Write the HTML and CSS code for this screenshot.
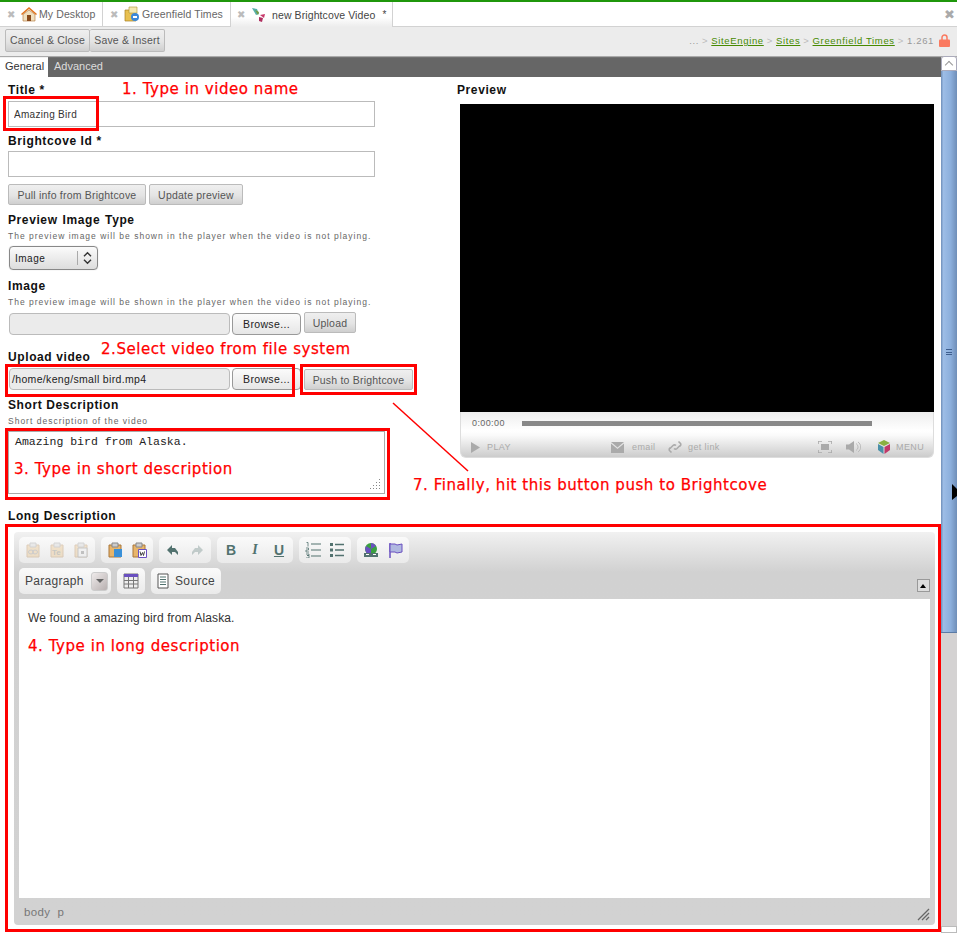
FILE: index.html
```html
<!DOCTYPE html>
<html lang="en">
<head>
    <meta charset="UTF-8">
    <title>new Brightcove Video</title>
    <link rel="stylesheet" href="styles.css">
</head>
<body>
    <svg class="defs" width="0" height="0">
        <symbol id="clip" viewBox="0 0 16 16">
            <path d="M2 3h12v12H2z" fill="#e8b56a" stroke="#a9773a"/>
            <path d="M5 1h6v4H5z" fill="#ccc" stroke="#888"/>
        </symbol>
    </svg>

    <div class="page">
        <header class="tabbar">
            <div class="tab tab-first">
                <span class="tab-x">&#10006;</span>
                <svg class="tab-icon" viewBox="0 0 16 16"><path d="M0 8 8 1l8 7-1 1-7-6-7 6z" fill="#e2731c"/><path d="M2 8.500 8 4l6 4.500V15H2z" fill="#f0e0c0" stroke="#b07030" stroke-width=".6"/><path d="M6 9h4v6H6z" fill="#8a4a1a"/></svg>
                <span class="tab-label">My Desktop</span>
            </div>
            <div class="tab tab-second">
                <span class="tab-x">&#10006;</span>
                <svg class="tab-icon" viewBox="0 0 16 16"><path d="M1 4h9l2 2v9H1z" fill="#e8c050" stroke="#a88020" stroke-width=".7"/><path d="M5 1h8v6H5z" fill="#f4e8b0" stroke="#b09030" stroke-width=".6"/><circle cx="11" cy="11" r="4" fill="#3a88d8"/><path d="M9 10h4v2H9z" fill="#fff"/></svg>
                <span class="tab-label">Greenfield Times</span>
            </div>
            <div class="tab tab-active">
                <span class="tab-x">&#10006;</span>
                <svg class="tab-icon" viewBox="0 0 16 16"><path d="M1 1l5 1 2 5-3 1z" fill="#58b0a8"/><path d="M4 3l4 2-1 3z" fill="#7a9a40"/><path d="M9 8l5-1-1 4z" fill="#c8386a"/><path d="M8 10l4 1-1 4-3-1z" fill="#b03060"/></svg>
                <span class="tab-label">new Brightcove Video</span>
                <span class="tab-star">*</span>
            </div>
            <span class="tabbar-x">&#10006;</span>
        </header>

        <div class="toolbar">
            <div class="btn-group">
                <button class="btn btn-cancel">Cancel &amp; Close</button>
                <button class="btn btn-save">Save &amp; Insert</button>
            </div>
            <div class="crumbs">
                <span>...</span><i>&gt;</i><a href="#">SiteEngine</a><i>&gt;</i><a href="#">Sites</a><i>&gt;</i><a href="#">Greenfield Times</a><i>&gt;</i><span>1.261</span>
                <svg class="lock" viewBox="0 0 11 13"><path d="M3 6V3.500a2.500 2.500 0 0 1 5 0V6" fill="none" stroke="#fa7a60" stroke-width="1.500"/><rect y="5.500" width="11" height="7.500" rx="1" fill="#fa7a60"/></svg>
            </div>
        </div>

        <div class="workspace">
            <main class="content">
                <nav class="subtabs">
                    <span class="subtab subtab-on">General</span>
                    <span class="subtab">Advanced</span>
                </nav>

                <div class="columns">
                    <form class="form">
                        <label class="lbl lbl-title">Title *</label>
                        <input class="text-input input-title" type="text" value="Amazing Bird">
                        <label class="lbl lbl-id">Brightcove Id *</label>
                        <input class="text-input input-id" type="text">
                        <div class="row row-pull">
                            <span class="btn btn-pull">Pull info from Brightcove</span>
                            <span class="btn btn-update">Update preview</span>
                        </div>
                        <label class="lbl lbl-type">Preview Image Type</label>
                        <p class="hint">The preview image will be shown in the player when the video is not playing.</p>
                        <div class="select">
                            <span>Image</span>
                            <svg class="select-arrows" viewBox="0 0 8 12"><path d="M1 4.500 4 1.500l3 3M1 7.500l3 3 3-3" fill="none" stroke="#333" stroke-width="1.200"/></svg>
                        </div>
                        <label class="lbl lbl-image">Image</label>
                        <p class="hint">The preview image will be shown in the player when the video is not playing.</p>
                        <div class="row row-file">
                            <div class="file-path"></div>
                            <span class="browse">Browse...</span>
                            <span class="btn btn-upload">Upload</span>
                        </div>
                        <label class="lbl lbl-upload">Upload video</label>
                        <div class="row row-file-2">
                            <div class="file-path">/home/keng/small bird.mp4</div>
                            <span class="browse">Browse...</span>
                            <span class="btn btn-push">Push to Brightcove</span>
                        </div>
                        <label class="lbl lbl-short">Short Description</label>
                        <p class="hint">Short description of the video</p>
                        <div class="textarea">
                            Amazing bird from Alaska.
                            <svg class="grip" viewBox="0 0 11 11"><path d="M9.500 1v1M9.500 4v1M6.500 4v1M9.500 7v1M6.500 7v1M3.500 7v1M9.500 10v1M6.500 10v1M3.500 10v1M.5 10v1" stroke="#888"/></svg>
                        </div>
                    </form>

                    <section class="preview">
                        <h3 class="lbl preview-title">Preview</h3>
                        <div class="player">
                            <div class="screen"></div>
                            <div class="controls">
                                <div class="seek">
                                    <span class="time">0:00:00</span>
                                    <span class="seek-bar"></span>
                                </div>
                                <div class="actions">
                                    <svg class="act-play" viewBox="0 0 9 11"><path d="M0 0l9 5.500L0 11z" fill="#aaa"/></svg>
                                    <span class="act-text act-play-text">PLAY</span>
                                    <svg class="act-mail" viewBox="0 0 13 11"><path d="M0 0h13L6.500 5.500z" fill="#aaa"/><path d="M0 1.500 6.500 7 13 1.500V11H0z" fill="#aaa"/></svg>
                                    <span class="act-text act-email">email</span>
                                    <svg class="act-link" viewBox="0 0 14 14"><path d="M2 8.500 5 5.500a2.200 2.200 0 0 1 3 0M12 5.500 9 8.500a2.200 2.200 0 0 1-3 0M3.500 12.500 1.500 10.500a2 2 0 0 1 0-2l1-1M10.500 1.500l2 2a2 2 0 0 1 0 2l-1 1" fill="none" stroke="#aaa" stroke-width="1.600"/></svg>
                                    <span class="act-text act-getlink">get link</span>
                                    <svg class="act-full" viewBox="0 0 14 12"><path d="M0 3V0h4M10 0h4v3M14 9v3h-4M4 12H0V9" fill="none" stroke="#aaa" stroke-width="1.600"/><rect x="3" y="3" width="8" height="6" fill="#aaa"/></svg>
                                    <svg class="act-vol" viewBox="0 0 15 12"><path d="M0 3.500h3L8 0v12L3 8.500H0z" fill="#aaa"/><path d="M10 2.500a4 4 0 0 1 0 7M12 1a6 6 0 0 1 0 10" fill="none" stroke="#bbb"/></svg>
                                    <svg class="act-cube" viewBox="0 0 14 14"><path d="M7 0l6 3-6 3-6-3z" fill="#8ab040"/><path d="M1 4l5.500 3v7L1 10z" fill="#4a90a8"/><path d="M7.500 7 13 4v6l-5.500 4z" fill="#c03868"/></svg>
                                    <span class="act-text act-menu">MENU</span>
                                </div>
                            </div>
                        </div>
                    </section>
                </div>

                <label class="lbl lbl-long">Long Description</label>
                <section class="editor">
                    <div class="ed-row">
                        <div class="ed-group">
                            <svg class="ed-ico ed-faded" viewBox="0 0 16 16"><use href="#clip"/><ellipse cx="6" cy="10" rx="2.500" ry="2" fill="none" stroke="#777"/><ellipse cx="10" cy="10" rx="2.500" ry="2" fill="none" stroke="#777"/></svg>
                            <svg class="ed-ico ed-faded" viewBox="0 0 16 16"><use href="#clip"/><text class="ed-te" x="3" y="13">Te</text></svg>
                            <svg class="ed-ico ed-faded" viewBox="0 0 16 16"><use href="#clip"/><path d="M5 6h9v9H5z" fill="#eee" stroke="#666"/><path d="M8 9h3v3H8z" fill="#555"/></svg>
                        </div>
                        <div class="ed-group">
                            <svg class="ed-ico" viewBox="0 0 16 16"><use href="#clip"/><path d="M7 7h8v8H7z" fill="#3a90d8"/></svg>
                            <svg class="ed-ico" viewBox="0 0 16 16"><use href="#clip"/><path d="M7.500 7.500h8v8h-8z" fill="#fff" stroke="#6a50c0"/><path d="M9 9.500l1 4 1.500-3 1 3 1-4" fill="none" stroke="#444"/></svg>
                        </div>
                        <div class="ed-group">
                            <svg class="ed-ico" viewBox="0 0 16 16"><path d="M7 3 2 8l5 5v-3h3l3 3V10L10 6H7z" fill="#52726f"/></svg>
                            <svg class="ed-ico ed-redo" viewBox="0 0 16 16"><path d="M9 3l5 5-5 5v-3H6l-3 3V10l3-4h3z" fill="#52726f"/></svg>
                        </div>
                        <div class="ed-group">
                            <span class="ed-txt ed-b">B</span>
                            <span class="ed-txt ed-i">I</span>
                            <span class="ed-txt ed-u">U</span>
                        </div>
                        <div class="ed-group">
                            <svg class="ed-ico" viewBox="0 0 16 16"><path d="M6 2h10M6 8h10M6 14h10" stroke="#52726f" stroke-width="1.200"/><path d="M1.500.5h1.500v4M1 6h2.500v2H1v2h3M1 12h3v1.500H2 4V16H1" fill="none" stroke="#52726f" stroke-width=".8"/></svg>
                            <svg class="ed-ico" viewBox="0 0 16 16"><path d="M1 1h3v3H1zM1 6.500h3v3H1zM1 12h3v3H1z" fill="#52726f"/><path d="M6 2.500h9M6 8h9M6 13.500h9" stroke="#52726f" stroke-width="1.400"/></svg>
                        </div>
                        <div class="ed-group">
                            <svg class="ed-ico" viewBox="0 0 16 16"><circle cx="8" cy="7" r="6" fill="#3aa040"/><path d="M8 1a6 6 0 0 1 5 3L8 7zM3 4l5 3v6a6 6 0 0 1-5-9z" fill="#6a50c0"/><path d="M1 11h14v4H1z" fill="#52726f"/><path d="M3 12.500h3M10 12.500h3" stroke="#fff"/></svg>
                            <svg class="ed-ico" viewBox="0 0 16 16"><path d="M3 1v15" stroke="#6a50c0" stroke-width="1.500"/><path d="M3 2h5l2 1 5-1v8l-5 1-2-1H3z" fill="#b0b8e0" stroke="#6a50c0"/></svg>
                        </div>
                    </div>
                    <div class="ed-row ed-row-2">
                        <div class="ed-group ed-format">
                            <span class="ed-format-text">Paragraph</span>
                            <span class="ed-drop"></span>
                        </div>
                        <div class="ed-group ed-single">
                            <svg class="ed-ico" viewBox="0 0 16 16"><path d="M1 1h14v14H1z" fill="#eee" stroke="#777"/><path d="M1 1h14v3H1z" fill="#6a50c0"/><path d="M1 7.500h14M1 11h14M5.500 4v11M10.500 4v11" stroke="#777"/></svg>
                        </div>
                        <div class="ed-group ed-source">
                            <svg class="ed-ico" viewBox="0 0 16 16"><path d="M3 1h10v14H3z" fill="#fff" stroke="#555"/><path d="M5 4h6M5 6.500h6M5 9h6M5 11.500h6" stroke="#52726f"/></svg>
                            <span>Source</span>
                        </div>
                        <span class="ed-collapse"></span>
                    </div>
                    <div class="ed-body">We found a amazing bird from Alaska.</div>
                    <footer class="ed-status">
                        <span>body&nbsp; p</span>
                        <svg class="ed-resize" viewBox="0 0 13 13"><path d="M1 12 12 1M5 12l7-7M9 12l3-3" stroke="#666" stroke-width="1.300"/></svg>
                    </footer>
                </section>
            </main>

            <aside class="scrollbar">
                <span class="sb-up"></span>
                <div class="sb-thumb"><span class="sb-grip"></span></div>
                <div class="sb-track"></div>
                <span class="sb-down"></span>
            </aside>
        </div>

        <!-- red notes drawn over the screen -->
        <div class="note-box box-title"></div>
        <div class="note-box box-file"></div>
        <div class="note-box box-push"></div>
        <div class="note-box box-short"></div>
        <div class="note-box box-long"></div>
        <span class="note note-1">1. Type in video name</span>
        <span class="note note-2">2.Select video from file system</span>
        <span class="note note-3">3. Type in short description</span>
        <span class="note note-7">7. Finally, hit this button push to Brightcove</span>
        <span class="note note-4">4. Type in long description</span>
        <svg class="note-line" viewBox="0 0 77 70"><path d="M1 1 76 69" stroke="#f00" stroke-width="1.500"/></svg>
        <svg class="cursor" viewBox="0 0 5 16"><path d="M0 0 5 5v7L0 16z" fill="#000"/></svg>
    </div>
</body>
</html>
```

FILE: styles.css
```css
* {
    box-sizing: border-box;
}
body {
    margin: 0;
    background-color: #fff;
    font-family: 'Liberation Sans', Arial, sans-serif;
    color: #333;
}
.defs {
    position: absolute;
}
.page {
    position: relative;
    width: 957px;
    height: 933px;
    overflow: hidden;
}

/* tabs */
.tabbar {
    display: flex;
    height: 27px;
    border-top: 2px solid #1f970b;
    border-bottom: 1px solid #d2d2d2;
    font-size: 10.500px;
    color: #666;
    letter-spacing: .1px;
    white-space: nowrap;
}
.tab {
    display: flex;
    align-items: center;
    height: 24px;
    padding-left: 7px;
    border-right: 1px solid #d2d2d2;
}
.tab-first {
    width: 103px;
}
.tab-second {
    width: 128px;
}
.tab-active {
    width: 163px;
    height: 25px;
    color: #444;
    background: linear-gradient(#fff, #fff 60%, #ececec);
    border-left: 1px solid #d2d2d2;
    margin-left: -1px;
    padding-left: 6px;
}
.tab-x {
    width: 13px;
    font-size: 10px;
    color: #bbb;
}
.tab-icon {
    width: 16px;
    height: 16px;
    margin-left: 1px;
    margin-right: 2px;
}
.tab-active .tab-label {
    margin-left: 3px;
}
.tab-star {
    margin-left: 7px;
    font-size: 10px;
}
.tabbar-x {
    margin-left: auto;
    margin-right: 2px;
    margin-top: 6px;
    font-size: 13px;
    color: #aaa;
    line-height: 14px;
}

/* top toolbar */
.toolbar {
    display: flex;
    justify-content: space-between;
    align-items: center;
    height: 29px;
    padding: 0 7px 2px 5px;
    background-color: #ececec;
    box-shadow: 0 1px 1px #aaa;
    position: relative;
}
.btn-group {
    display: flex;
}
.btn {
    display: flex;
    align-items: center;
    justify-content: center;
    font-family: inherit;
    font-size: 10.500px;
    letter-spacing: .2px;
    color: #555;
    background: linear-gradient(#efefef, #e4e4e4 55%, #cfcfcf);
    border: 1px solid #bbb;
    border-radius: 2px;
    padding: 1px 0 0 0;
}
.btn-cancel {
    width: 85px;
    height: 23px;
    padding: 0 0 1px 0;
}
.btn-save {
    width: 75px;
    height: 23px;
    padding: 0 0 1px 0;
    border-left: 0;
}
.crumbs {
    display: flex;
    align-items: center;
    font-size: 9.500px;
    letter-spacing: .65px;
    color: #999;
}
.crumbs a {
    color: #478a00;
}
.crumbs i {
    font-style: normal;
    margin: 0 3px;
    color: #bbb;
}
.lock {
    width: 11px;
    height: 13px;
    margin-left: 5px;
}

/* main area */
.workspace {
    display: flex;
}
.content {
    width: 941px;
    height: 877px;
}
.subtabs {
    display: flex;
    height: 21px;
    background-color: #666;
    font-size: 11px;
    line-height: 21px;
    color: #ddd;
}
.subtab {
    padding: 0 6px;
    width: 53px;
}
.subtab-on {
    width: 48px;
    padding: 0 5px;
    background-color: #fff;
    color: #333;
}
.columns {
    display: grid;
    grid-template-columns: 457px 1fr;
    height: 432px;
}
.form {
    display: flex;
    flex-direction: column;
    padding: 6px 0 0 8px;
}
.lbl {
    display: block;
    height: 14px;
    margin: 0;
    font-size: 12px;
    line-height: 14px;
    font-weight: bold;
    color: #111;
    letter-spacing: .6px;
}
.text-input {
    width: 367px;
    height: 26px;
    padding: 0 5px;
    font-family: inherit;
    font-size: 10px;
    letter-spacing: .3px;
    color: #333;
    background-color: #fff;
    border: 1px solid #bbb;
    border-radius: 0;
    outline: none;
}
.input-title {
    margin-top: 4px;
}
.lbl-id {
    margin-top: 7px;
}
.input-id {
    margin-top: 3px;
}
.row {
    display: flex;
    align-items: center;
}
.row-pull {
    margin-top: 7px;
    gap: 3px;
}
.btn-pull {
    width: 138px;
    height: 21px;
}
.btn-update {
    width: 94px;
    height: 21px;
}
.lbl-type {
    margin-top: 8px;
    word-spacing: 1px;
}
.hint {
    margin: 4px 0 0 0;
    height: 10px;
    font-size: 8.500px;
    line-height: 10px;
    letter-spacing: 1px;
    color: #666;
    white-space: nowrap;
}
.select {
    display: flex;
    align-items: center;
    justify-content: space-between;
    width: 89px;
    height: 24px;
    margin: 5px 0 0 1px;
    padding: 0 0 0 5px;
    font-size: 10px;
    letter-spacing: .5px;
    color: #222;
    background: linear-gradient(#fbfbfb, #ddd);
    border: 1px solid #888;
    border-radius: 4px;
    box-shadow: 0 0 1px #bbb;
}
.select-arrows {
    width: 20px;
    height: 14px;
    padding: 0 4px 0 4px;
    border-left: 1px solid #aaa;
}
.lbl-image {
    margin-top: 9px;
}
.row-file {
    margin: 5px 0 0 1px;
    height: 23px;
}
.file-path {
    width: 221px;
    height: 22px;
    padding-left: 2px;
    font-size: 10.500px;
    line-height: 20px;
    letter-spacing: .33px;
    color: #222;
    background-color: #ebebeb;
    border: 1px solid #bbb;
    border-radius: 4px;
}
.browse {
    width: 69px;
    height: 22px;
    margin-left: 2px;
    font-size: 10.500px;
    line-height: 20px;
    text-align: center;
    letter-spacing: .35px;
    color: #222;
    background: linear-gradient(#fbfbfb, #e6e6e6);
    border: 1px solid #999;
    border-radius: 4px;
}
.btn-upload {
    width: 52px;
    height: 21px;
    margin-left: 3px;
    margin-top: -2px;
}
.lbl-upload {
    margin-top: 15px;
}
.row-file-2 {
    margin: 4px 0 0 1px;
    height: 22px;
}
.btn-push {
    width: 109px;
    height: 21px;
    margin-left: 3px;
}
.lbl-short {
    margin-top: 8px;
}
.textarea {
    position: relative;
    width: 377px;
    height: 63px;
    margin-top: 5px;
    padding: 3px 6px;
    font-family: 'Liberation Mono', monospace;
    font-size: 11.500px;
    line-height: 14px;
    color: #222;
    background-color: #fff;
    border: 1px solid #aaa;
}
.grip {
    position: absolute;
    right: 3px;
    bottom: 4px;
    width: 11px;
    height: 11px;
}

/* player */
.preview {
    padding-top: 6px;
}
.preview-title {
    margin-bottom: 7px;
}
.player {
    width: 474px;
    margin-left: 3px;
}
.screen {
    height: 308px;
    background-color: #000;
}
.controls {
    height: 46px;
    background: linear-gradient(#eee, #fff 42%, #fafafa 52%, #ccc);
    border: 1px solid #ddd;
    border-top: 0;
    border-radius: 0 0 6px 6px;
    font-size: 9px;
    color: #aaa;
    letter-spacing: .4px;
}
.seek {
    display: flex;
    align-items: center;
    height: 22px;
    padding-left: 11px;
}
.time {
    width: 50px;
    color: #666;
}
.seek-bar {
    width: 350px;
    height: 5px;
    background-color: #888;
}
.actions {
    display: flex;
    align-items: center;
    height: 26px;
    padding-left: 10px;
}
.act-play {
    width: 9px;
    height: 11px;
}
.act-text {
    line-height: 11px;
}
.act-play-text {
    margin-left: 7px;
    width: 124px;
}
.act-mail {
    width: 13px;
    height: 11px;
}
.act-email {
    margin-left: 8px;
    width: 36px;
}
.act-link {
    width: 14px;
    height: 14px;
}
.act-getlink {
    margin-left: 6px;
    width: 130px;
}
.act-full {
    width: 14px;
    height: 12px;
}
.act-vol {
    width: 15px;
    height: 12px;
    margin-left: 14px;
}
.act-cube {
    width: 14px;
    height: 14px;
    margin-left: 16px;
}
.act-menu {
    margin-left: 5px;
}

/* long description editor */
.lbl-long {
    margin: 0 0 9px 8px;
}
.editor {
    display: flex;
    flex-direction: column;
    width: 921px;
    height: 393px;
    margin-left: 14px;
    padding: 5px 5px 0 5px;
    background: linear-gradient(#f1f1f1, #d1d1d1 40px, #d2d2d2);
    border-radius: 4px;
}
.ed-row {
    display: flex;
    gap: 6px;
    height: 26px;
    flex-shrink: 0;
}
.ed-row-2 {
    margin-top: 5px;
    position: relative;
}
.ed-group {
    display: flex;
    align-items: center;
    padding: 0 2px;
    background: linear-gradient(#fafafa, #eaeaea);
    border-radius: 5px;
}
.ed-ico {
    width: 16px;
    height: 16px;
    margin: 0 4px;
}
.ed-faded {
    opacity: .3;
}
.ed-te {
    font-size: 8px;
    font-weight: bold;
    fill: #665;
}
.ed-redo {
    opacity: .3;
}
.ed-txt {
    width: 24px;
    text-align: center;
    font-size: 14px;
    color: #52726f;
    font-weight: bold;
}
.ed-i {
    font-style: italic;
    font-family: 'Liberation Serif', serif;
}
.ed-u {
    text-decoration: underline;
}
.ed-format {
    width: 92px;
    padding: 0 0 0 6px;
    gap: 7px;
    font-size: 12px;
    letter-spacing: .3px;
    color: #444;
}
.ed-drop {
    position: relative;
    width: 17px;
    height: 19px;
    background: linear-gradient(135deg, #efebeb, #b8b0b0);
    border: 1px solid #ccc;
    border-radius: 3px;
}
.ed-drop::after {
    content: "";
    position: absolute;
    left: 4px;
    top: 6px;
    border: 4px solid transparent;
    border-top: 4px solid #666;
}
.ed-format-text {
    white-space: nowrap;
}
.ed-single {
    width: 28px;
    padding: 0;
}
.ed-single .ed-ico {
    margin: 0 6px;
}
.ed-source {
    width: 70px;
    padding: 0;
    font-size: 12px;
    letter-spacing: .35px;
    color: #444;
}
.ed-collapse {
    position: absolute;
    right: 0;
    top: 11px;
    width: 13px;
    height: 13px;
    background-color: #ddd;
    border: 1px solid #999;
}
.ed-collapse::after {
    content: "";
    position: absolute;
    left: 2px;
    top: 1px;
    border: 3.500px solid transparent;
    border-bottom: 4px solid #000;
}
.ed-body {
    flex: 1;
    margin-top: 5px;
    padding: 12px 9px;
    font-size: 12px;
    line-height: 14px;
    letter-spacing: .11px;
    color: #333;
    background-color: #fff;
}
.ed-status {
    display: flex;
    align-items: center;
    justify-content: space-between;
    flex-shrink: 0;
    height: 27px;
    padding: 0 0 0 5px;
    font-size: 11.500px;
    letter-spacing: .35px;
    color: #777;
}
.ed-resize {
    width: 13px;
    height: 13px;
    margin-top: 6px;
}

/* scrollbar */
.scrollbar {
    display: flex;
    flex-direction: column;
    width: 16px;
    height: 877px;
    background-color: #d4d2d2;
}
.sb-up {
    position: relative;
    height: 15px;
    background-color: #fff;
    border: 1px solid #aab;
    border-radius: 3px 3px 0 0;
}
.sb-up::after {
    content: "";
    position: absolute;
    left: 4px;
    top: 5px;
    width: 5px;
    height: 5px;
    border-top: 1px solid #999;
    border-left: 1px solid #999;
    transform: rotate(45deg);
}
.sb-thumb {
    display: flex;
    justify-content: center;
    align-items: center;
    height: 562px;
    background: linear-gradient(90deg, #6f8eb8, #9dbde6 15%, #8cafdc 60%, #6f8eb8);
    border-bottom: 1px solid #5a7aa5;
}
.sb-grip {
    width: 6px;
    height: 6px;
    border-top: 1px solid #3f5f8f;
    border-bottom: 1px solid #3f5f8f;
    background: linear-gradient(transparent 2px, #3f5f8f 2px, #3f5f8f 3px, transparent 3px);
}
.sb-track {
    flex: 1;
    background-color: #d4d2d2;
}
.sb-down {
    height: 7px;
    background-color: #fff;
    border: 1px solid #bbb;
}

/* annotations */
.note-box {
    position: absolute;
    border: 3px solid #f00;
}
.box-title {
    left: 3px;
    top: 96px;
    width: 96px;
    height: 35px;
}
.box-file {
    left: 5px;
    top: 364px;
    width: 290px;
    height: 33px;
}
.box-push {
    left: 300px;
    top: 364px;
    width: 117px;
    height: 31px;
}
.box-short {
    left: 5px;
    top: 428px;
    width: 385px;
    height: 72px;
}
.box-long {
    left: 5px;
    top: 524px;
    width: 936px;
    height: 408px;
}
.note {
    position: absolute;
    font-family: 'DejaVu Sans', sans-serif;
    font-size: 15px;
    line-height: 18px;
    letter-spacing: .55px;
    -webkit-text-stroke: .25px #f00;
    color: #f00;
    white-space: nowrap;
}
.note-1 {
    left: 122px;
    top: 80px;
}
.note-2 {
    left: 101px;
    top: 340px;
}
.note-3 {
    left: 14px;
    top: 460px;
}
.note-7 {
    left: 413px;
    top: 476px;
}
.note-4 {
    left: 28px;
    top: 637px;
}
.note-line {
    position: absolute;
    left: 392px;
    top: 402px;
    width: 77px;
    height: 70px;
}
.cursor {
    position: absolute;
    left: 952px;
    top: 484px;
    width: 5px;
    height: 16px;
}
```
